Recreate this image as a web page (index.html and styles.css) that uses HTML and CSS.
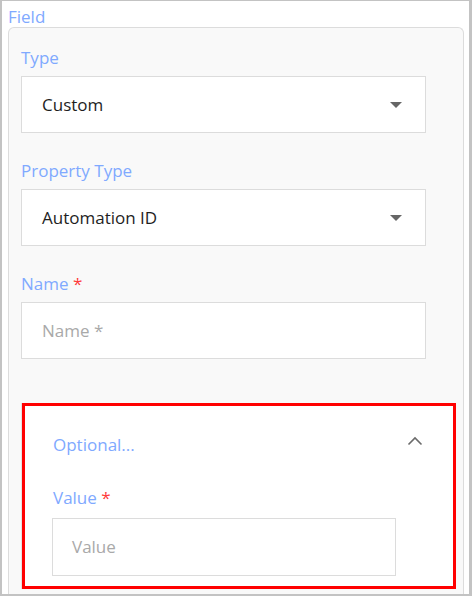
FILE: index.html
```html
<!DOCTYPE html>
<html>
<head>
<meta charset="utf-8">
<link rel="stylesheet" href="styles.css">
</head>
<body>
<div class="window">
  <div class="legend">Field</div>
  <div class="card">
    <div class="field">
      <div class="label">Type</div>
      <div class="box select"><span class="value">Custom</span><span class="caret"></span></div>
    </div>
    <div class="field">
      <div class="label">Property Type</div>
      <div class="box select"><span class="value">Automation ID</span><span class="caret"></span></div>
    </div>
    <div class="field">
      <div class="label">Name <span class="req">*</span></div>
      <div class="box input"><span class="placeholder">Name *</span></div>
    </div>
    <section class="optional">
      <div class="opt-head">
        <span class="opt-title">Optional...</span>
        <svg class="chevron" width="16" height="10" viewBox="0 0 16 10"><polyline points="1.5,8.5 8,2 14.5,8.5" fill="none" stroke="#6b6b6b" stroke-width="1.6"/></svg>
      </div>
      <div class="label opt-label">Value <span class="req">*</span></div>
      <div class="box input narrow"><span class="placeholder">Value</span></div>
    </section>
  </div>
</div>
</body>
</html>
```

FILE: styles.css
```css
html, body {
  margin: 0;
  padding: 0;
  background: #ffffff;
}

body {
  font-family: "Open Sans", "Noto Sans", sans-serif;
  font-size: 17px;
  line-height: 20px;
}

.window {
  box-sizing: border-box;
  width: 472px;
  height: 596px;
  border-left: 2px solid #c3c3c3;
  border-top: 1px solid #c3c3c3;
  border-right: 3px solid #c3c3c3;
  border-bottom: 2px solid #c3c3c3;
  padding: 6px 0 0 6px;
  display: flex;
  flex-direction: column;
  overflow: hidden;
  background: #ffffff;
}

.legend {
  color: #80a9ff;
  height: 20px;
}

.card {
  flex: 1;
  width: 456px;
  box-sizing: border-box;
  border: 1px solid #dcdcdc;
  border-bottom: none;
  border-radius: 6px 6px 0 0;
  background: #f9f9f9;
  padding: 20px 7px 0 12px;
}

.field {
  width: 405px;
  margin-bottom: 28px;
}

.label {
  color: #80a9ff;
  height: 20px;
  margin-bottom: 8px;
}

.req {
  color: #ff3b3b;
}

.box {
  box-sizing: border-box;
  height: 57px;
  border: 1px solid #dcdcdc;
  background: #ffffff;
  display: flex;
  align-items: center;
}

.select {
  justify-content: space-between;
  padding: 0 23px 0 20px;
  color: #1e1e1e;
}

.caret {
  width: 0;
  height: 0;
  border-left: 6px solid transparent;
  border-right: 6px solid transparent;
  border-top: 6px solid #666666;
}

.input {
  padding: 0 20px;
}

.placeholder {
  color: #a9a9a9;
}

.optional {
  margin-top: 44px;
  margin-left: 1px;
  width: 434px;
  box-sizing: border-box;
  border: 3px solid #ff0000;
  box-shadow: -1px 0 0 #e2e2e2;
  background: #ffffff;
  padding: 29px 30px 10px 27px;
}

.opt-head {
  display: flex;
  justify-content: space-between;
  align-items: flex-start;
  height: 20px;
  margin-bottom: 33px;
}

.opt-title {
  color: #80a9ff;
  margin-left: 1px;
}

.chevron {
  margin-top: 1px;
}

.opt-label {
  margin-left: 1px;
  margin-bottom: 10px;
}

.narrow {
  width: 344px;
  height: 58px;
  padding: 0 19px;
}
```
